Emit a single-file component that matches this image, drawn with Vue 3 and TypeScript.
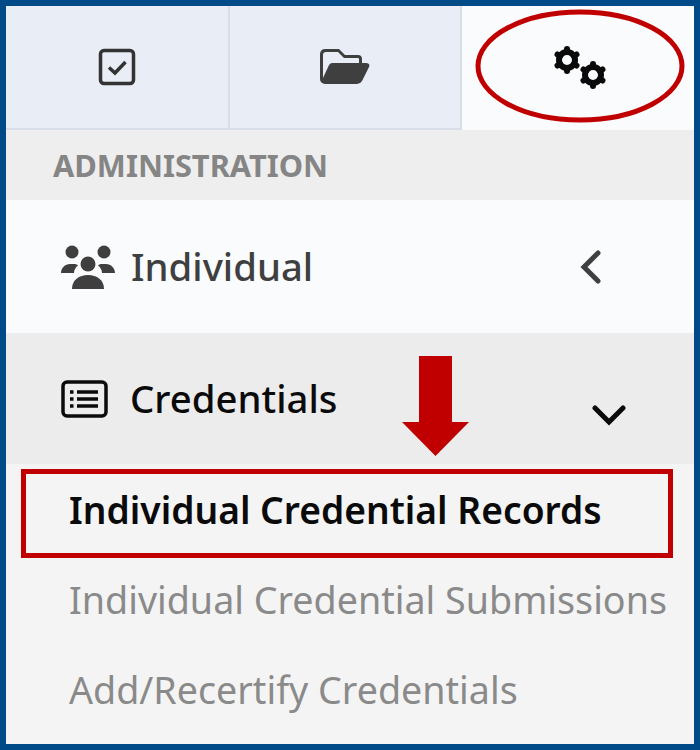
<script setup lang="ts">
const subLinks = [
  { label: 'Individual Credential Records', active: true },
  { label: 'Individual Credential Submissions', active: false },
  { label: 'Add/Recertify Credentials', active: false },
]
</script>

<template>
  <div class="frame">
    <div class="tabs">
      <div class="tab">
        <svg width="38" height="38" viewBox="0 0 38 38" fill="none" stroke="#333">
          <rect x="2.500" y="2.500" width="33" height="33" rx="3.500" stroke-width="3.500" />
          <path d="M11 19.500l6 5.500 10.500-11" stroke-width="3.500" />
        </svg>
      </div>
      <div class="tab">
        <svg width="50" height="38" viewBox="0 0 50 38">
          <path fill="#3f3f3f" fill-rule="evenodd" d="M6 1h13l6 6h13a4 4 0 0 1 4 4v4h-3v-4a1 1 0 0 0-1-1H24l-6-6H6a3 3 0 0 0-3 3v23l6-13a4 4 0 0 1 4-2h33c3 0 4 2 3 4l-7 14a6 6 0 0 1-5 3H5a5 5 0 0 1-5-5V6a5 5 0 0 1 6-5z" />
        </svg>
      </div>
      <div class="tab tab-active">
        <svg class="cogs" width="54" height="44" viewBox="0 0 54 44" fill="none" stroke="#0a0a0a">
          <circle cx="14" cy="14" r="8" stroke-width="6" />
          <circle cx="40" cy="29" r="8" stroke-width="6" />
          <path stroke-width="6" stroke-linecap="round" d="M14 3v3M14 22v3M4.500 8.500l2.600 1.500M20.900 18l2.600 1.500M4.500 19.500l2.600-1.500M20.900 10l2.600-1.500M40 18v3M40 37v3M30.500 23.500l2.600 1.500M46.900 33l2.600 1.500M30.500 34.500l2.600-1.500M46.900 25l2.600-1.500" />
        </svg>
      </div>
    </div>

    <div class="section-title">ADMINISTRATION</div>

    <div class="menu-row">
      <svg class="row-icon" width="54" height="44" viewBox="0 0 54 44">
        <g fill="#3f3f3f">
          <circle cx="11" cy="7" r="6.500" />
          <circle cx="43" cy="7" r="6.500" />
          <circle cx="27" cy="19" r="7.500" />
          <path d="M11 44c0-9 7-14 16-14s16 5 16 14z" />
          <path d="M0 28c0-5 4-9 9-9h4c2 0 3 .5 4 1.500-2.500 2-4 4.500-4 7.500z" />
          <path d="M54 28c0-5-4-9-9-9h-4c-2 0-3 .5-4 1.500 2.500 2 4 4.500 4 7.500z" />
        </g>
      </svg>
      <span class="row-label">Individual</span>
      <svg class="chev-left" width="22" height="34" viewBox="0 0 22 34" fill="none" stroke="#3f3f3f" stroke-width="5" stroke-linecap="round">
        <path d="M18 3L4 17l14 14" />
      </svg>
    </div>

    <div class="menu-row menu-row-open">
      <svg class="row-icon" width="47" height="38" viewBox="0 0 47 38" fill="none" stroke="#0a0a0a">
        <rect x="2" y="2" width="43" height="34" rx="4" stroke-width="3.500" />
        <path stroke-width="3.500" d="M16 12h21M16 19h21M16 26h21M9 12h3.500M9 19h3.500M9 26h3.500" />
      </svg>
      <span class="row-label">Credentials</span>
      <svg class="chev-down" width="34" height="22" viewBox="0 0 34 22" fill="none" stroke="#0a0a0a" stroke-width="5" stroke-linecap="round">
        <path d="M3 4l14 14L31 4" />
      </svg>
    </div>

    <div class="submenu">
      <a v-for="link in subLinks" :key="link.label" class="sub-link" :class="{ 'sub-link-active': link.active }">
        {{ link.label }}
      </a>
    </div>

    <!-- red callouts drawn on top of the screenshot -->
    <svg class="callouts" width="700" height="750" viewBox="0 0 700 750" fill="none">
      <ellipse cx="580" cy="66" rx="102" ry="54" stroke="#c00000" stroke-width="5" />
      <path fill="#c00000" d="M419 356h33v66h17l-33.500 34L402 422h17z" />
      <rect x="23.500" y="471.500" width="647" height="84" stroke="#c00000" stroke-width="5" />
    </svg>
  </div>
</template>

<style scoped>
.frame {
  position: relative;
  box-sizing: border-box;
  width: 700px;
  height: 750px;
  border: 6px solid #004b87;
  background: #f4f4f4;
  display: flex;
  flex-direction: column;
  font-family: "Noto Sans", "Open Sans", sans-serif;
  overflow: hidden;
}
.tabs {
  display: grid;
  grid-template-columns: 224px 232px 1fr;
  height: 124px;
  flex: none;
}
.tab {
  display: flex;
  align-items: center;
  justify-content: center;
  box-sizing: border-box;
  background: #e9edf5;
  border-right: 2px solid #d8dde7;
  border-bottom: 2px solid #d8dde7;
}
.tab-active {
  background: #fafbfd;
  border: none;
}
.cogs {
  margin-left: 4px;
}
.section-title {
  flex: none;
  height: 70px;
  display: flex;
  align-items: center;
  padding-left: 47px;
  box-sizing: border-box;
  background: #eeeeee;
  color: #858585;
  font-size: 30.800px;
  font-weight: 700;
}
.menu-row {
  flex: none;
  height: 133px;
  display: flex;
  align-items: center;
  box-sizing: border-box;
  padding-left: 55px;
  background: #fafbfd;
  color: #3f3f3f;
}
.menu-row-open {
  height: 131px;
  background: #ececec;
  color: #0a0a0a;
}
.row-label {
  font-size: 38.300px;
  font-weight: 500;
  margin-left: 16px;
  padding-bottom: 2px;
}
.menu-row-open .row-label {
  margin-left: 22px;
}
.chev-left {
  margin-left: auto;
  margin-right: 92px;
}
.chev-down {
  margin-left: auto;
  margin-right: 68px;
  margin-top: 32px;
}
.submenu {
  flex: 1;
  display: flex;
  flex-direction: column;
  padding-left: 63px;
}
.sub-link {
  height: 90px;
  display: flex;
  align-items: center;
  font-size: 37.650px;
  color: #8a8a8a;
  white-space: nowrap;
}
.sub-link-active {
  color: #0a0a0a;
  font-size: 37.200px;
  font-weight: 600;
}
.callouts {
  position: absolute;
  left: -6px;
  top: -6px;
  pointer-events: none;
}
</style>
